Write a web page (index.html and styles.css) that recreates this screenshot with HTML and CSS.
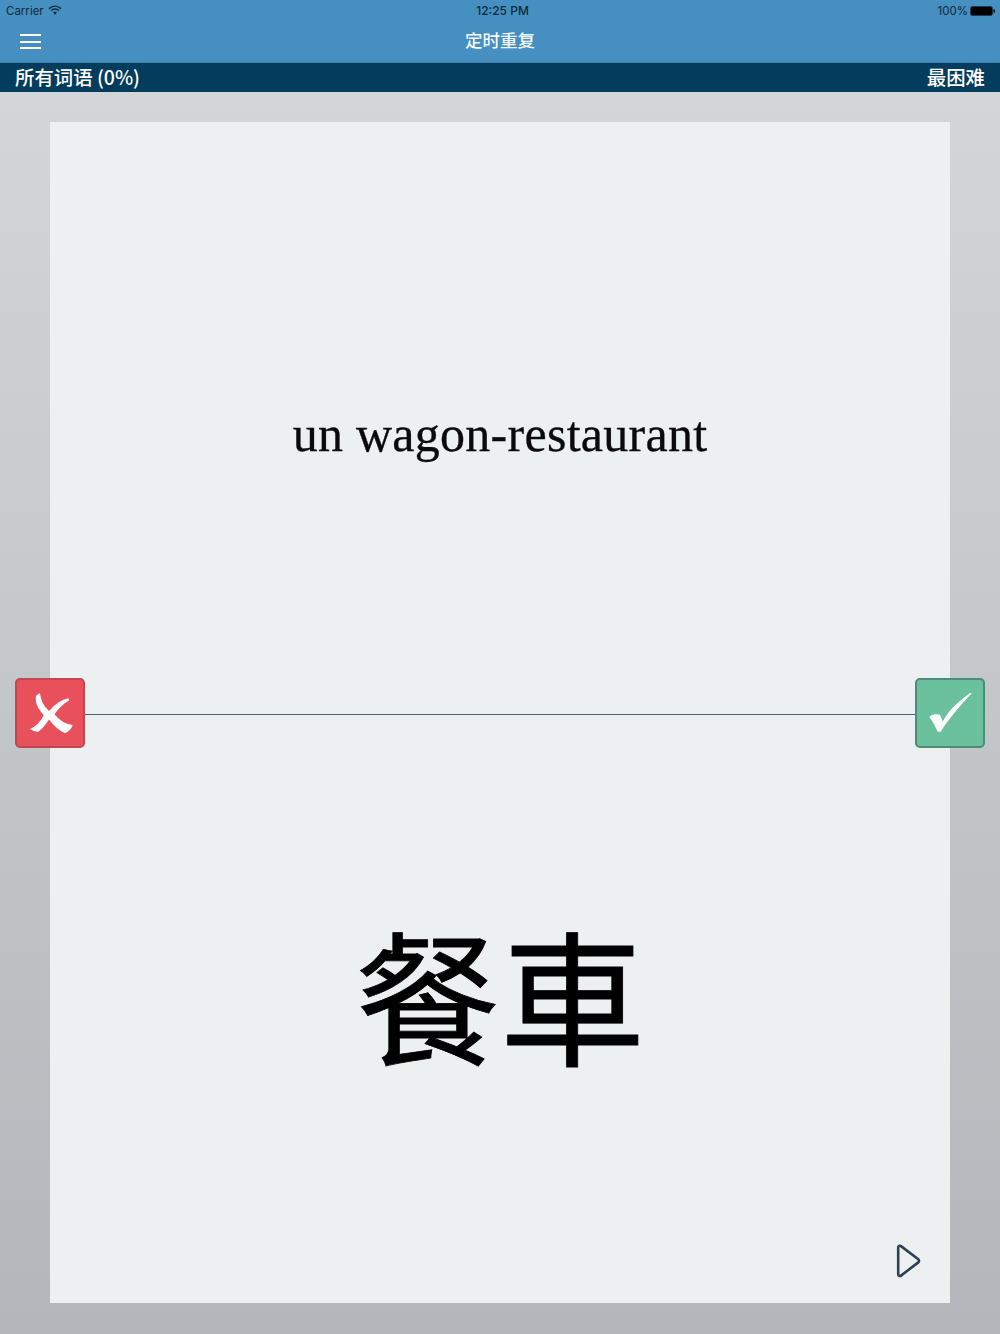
FILE: index.html
```html
<!DOCTYPE html>
<html lang="zh">
<head>
<meta charset="utf-8">
<title>定时重复</title>
<link rel="stylesheet" href="styles.css">
</head>
<body>
<div class="app">
  <header class="top">
    <div class="status">
      <div class="status-left"><span>Carrier</span>
        <svg class="wifi" width="14" height="10" viewBox="0 0 14 10"><path d="M1 3.600C4.600.4 9.400.4 13 3.600" fill="none" stroke="#11283a" stroke-width="1.500"/><path d="M3.200 5.600c2.300-1.900 5.300-1.900 7.600 0" fill="none" stroke="#11283a" stroke-width="1.500"/><path d="M5 7.500c1.200-1 2.800-1 4 0L7 9.800z" fill="#11283a"/></svg>
      </div>
      <div class="status-time">12:25 PM</div>
      <div class="status-right"><span>100%</span>
        <svg width="25" height="10" viewBox="0 0 25 10"><rect x=".5" y=".5" width="22" height="9" rx="2" fill="#000" stroke="#1c3a52"/><rect x="23.400" y="3.200" width="1.400" height="3.600" rx=".6" fill="#000"/></svg>
      </div>
    </div>
    <nav class="nav">
      <button class="menu" aria-label="menu"><span></span><span></span><span></span></button>
      <div class="nav-title">定时重复</div>
    </nav>
  </header>
  <div class="subbar"><span>所有词语 (0%)</span><span>最困难</span></div>
  <main class="stage">
    <section class="card">
      <div class="half half-top"><div class="word">un wagon-restaurant</div></div>
      <div class="rule"></div>
      <div class="half half-bottom"><div class="kanji">餐車</div></div>
      <svg class="play" width="26" height="34" viewBox="0 0 26 34"><path d="M3.200 3.600c0-1.600 1.600-2.300 2.800-1.500l17.300 13.200c1 .8 1 2.300 0 3.100L6 31.600c-1.200.9-2.800.2-2.800-1.400z" fill="none" stroke="#2c4159" stroke-width="2.600" stroke-linejoin="round"/></svg>
    </section>
    <button class="mark mark-no" aria-label="wrong">
      <svg class="mark-icon" viewBox="2 2 66 66"><path d="M21 17.700Q23 16 25 15.300Q26 26 34 33Q43.500 22 53.300 20.300L54.300 22.300Q46 27 39.500 36.300Q46.500 45.500 57.700 47Q56 52.500 50 55.300Q41 51 34 41.500Q29 49.500 23.300 53.700Q19 54 15 51Q24 47 28.800 37Q22 30 21 23.700Q20.500 20 21 17.700Z" fill="#fff"/></svg>
    </button>
    <button class="mark mark-yes" aria-label="right">
      <svg class="mark-icon" viewBox="2 2 66 66"><path d="M14.300 38.700Q17 36.500 20 36.300Q24 36 25 37Q26.500 40 27.700 43.700Q34 30 55.500 14.700L56.500 15.500Q37 36 25.500 53.700L22.700 53.700Q19 45 14.300 38.700Z" fill="#fff"/></svg>
    </button>
  </main>
</div>
</body>
</html>
```
FILE: styles.css
```css
* { box-sizing: border-box; }
html, body { margin: 0; padding: 0; }
body { width: 1000px; height: 1334px; overflow: hidden; font-family: "Inter", "Noto Sans CJK SC", sans-serif; }
.app { display: flex; flex-direction: column; height: 1334px; }
.top { background: #468fc1; height: 63px; border-bottom: 1px solid #3d82b0; flex: none; }
.status { height: 20px; display: grid; grid-template-columns: 1fr auto 1fr; align-items: center; padding: 1px 5px 0 6px; font-size: 11.5px; color: #11283a; font-family: "Inter", sans-serif; }
.status-left { display: flex; align-items: center; gap: 4px; }
.status-time { font-weight: 500; font-size: 12px; padding-left: 4px; }
.status-right { display: flex; align-items: center; justify-content: flex-end; gap: 2px; }
.wifi { margin-top: -2px; }
.nav { height: 42px; position: relative; display: flex; align-items: center; justify-content: center; padding-bottom: 3px; }
.menu { position: absolute; left: 20px; top: 14px; width: 21px; height: 15px; padding: 0; border: 0; background: none; display: flex; flex-direction: column; justify-content: space-between; }
.menu span { display: block; height: 2px; background: #fff; }
.nav-title { color: #f4f8fb; font-size: 17.5px; font-weight: 500; font-family: "Noto Sans CJK SC", sans-serif; }
.subbar { height: 29px; flex: none; background: #033c5c; color: #fff; display: flex; justify-content: space-between; align-items: center; padding: 0 15px 3px; font-size: 19.4px; font-weight: 500; font-family: "Noto Sans CJK SC", sans-serif; }
.stage { flex: 1; position: relative; padding: 30px 50px 31px; background: linear-gradient(#d3d6d7, #b3b7bb); display: flex; }
.card { flex: 1; position: relative; background: #ecf0f1; display: flex; flex-direction: column; }
.half { display: flex; justify-content: center; align-items: center; }
.half-top { height: 592px; padding-top: 32px; flex: none; }
.rule { height: 1px; background: #486076; flex: none; }
.half-bottom { flex: 1; padding-bottom: 34px; }
.word { font-family: "Liberation Serif", serif; font-size: 50px; letter-spacing: .27px; color: #0a0a0a; line-height: 1.2; -webkit-text-stroke: .3px #0a0a0a; }
.kanji { font-family: "Noto Sans CJK TC", sans-serif; font-size: 145px; font-weight: 400; line-height: 1; color: #000; -webkit-text-stroke: .8px #000; }
.play { position: absolute; right: 29px; bottom: 25px; }
.mark { position: absolute; top: 586px; width: 70px; height: 70px; border-radius: 5px; padding: 0; display: flex; align-items: center; justify-content: center; }
.mark-icon { width: 66px; height: 66px; display: block; }
.mark-no { left: 15px; background: #e8515b; border: 2px solid #c44650; }
.mark-yes { right: 15px; background: #6bc09d; border: 2px solid #4f8c76; }
```
